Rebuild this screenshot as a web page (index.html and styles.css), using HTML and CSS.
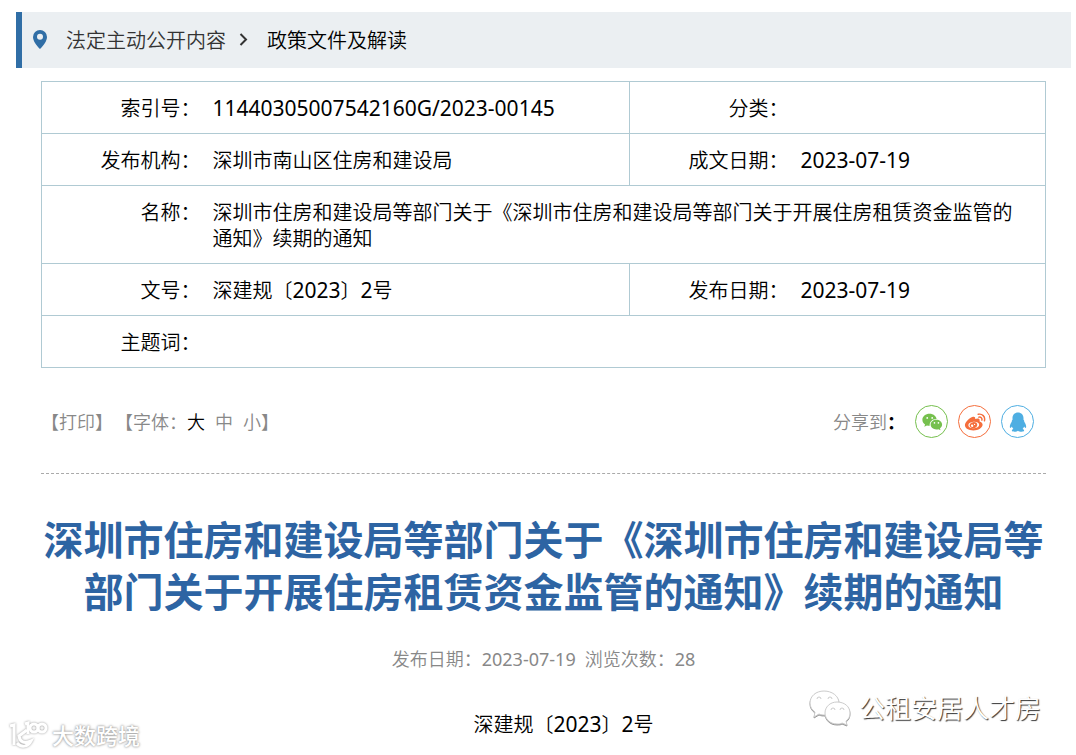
FILE: index.html
```
<!DOCTYPE html>
<html lang="zh-CN">
  <head>
    <meta charset="UTF-8" />
    <meta name="viewport" content="width=device-width, initial-scale=1.0" />
    <title>政策文件及解读</title>
    <link rel="stylesheet" href="styles.css">
  </head>
  <body>
    <nav class="crumbs">
      <svg class="pin" viewBox="0 0 14 19"><path fill-rule="evenodd" d="M7 0a7 7 0 0 1 7 7c0 4-3.500 8.500-7 12C3.500 15.500 0 11 0 7a7 7 0 0 1 7-7zm0 3.800a3 3 0 1 0 0 6 3 3 0 0 0 0-6z"/></svg>
      <a href="#">法定主动公开内容</a>
      <svg class="arrow" viewBox="0 0 9 13"><path d="M1.500 1l5.500 5.500L1.500 12"/></svg>
      <a href="#" class="current">政策文件及解读</a>
    </nav>

    <main class="content">
      <table class="info">
        <colgroup>
          <col class="col-label" />
          <col />
          <col class="col-label" />
          <col class="col-date" />
        </colgroup>
        <tr>
          <th>索引号：</th>
          <td><span class="num">11440305007542160G/2023-00145</span></td>
          <th class="split">分类：</th>
          <td></td>
        </tr>
        <tr>
          <th>发布机构：</th>
          <td>深圳市南山区住房和建设局</td>
          <th class="split">成文日期：</th>
          <td><span class="num">2023-07-19</span></td>
        </tr>
        <tr>
          <th>名称：</th>
          <td colspan="3">深圳市住房和建设局等部门关于《深圳市住房和建设局等部门关于开展住房租赁资金监管的通知》续期的通知</td>
        </tr>
        <tr>
          <th>文号：</th>
          <td>深建规〔<span class="num">2023</span>〕<span class="num">2</span>号</td>
          <th class="split">发布日期：</th>
          <td><span class="num">2023-07-19</span></td>
        </tr>
        <tr>
          <th>主题词：</th>
          <td colspan="3"></td>
        </tr>
      </table>

      <div class="tools">
        <div class="print">
          <button>【打印】</button>
          <div class="sizes">【字体：<button class="on">大</button><button>中</button><button>小</button>】</div>
        </div>
        <div class="share">
          <span>分享到<b>：</b></span>
          <a href="#" class="wechat" aria-label="微信">
            <svg viewBox="0 0 24 24">
              <path d="M9.500 3C4.800 3 1.500 6 1.500 9.600c0 2.100 1.100 3.900 2.900 5.100l-.8 2.500 2.900-1.500c1 .3 1.900.4 3 .4C9 11.500 12.500 8.500 17 8.600 16.300 5.300 13.300 3 9.500 3z"/>
              <path d="M23 14.800c0-3-2.900-5.300-6.200-5.300-3.500 0-6.300 2.300-6.300 5.300s2.800 5.400 6.300 5.400c.8 0 1.500-.2 2.200-.4l2.300 1.300-.6-2.100c1.400-1 2.300-2.500 2.300-4.200z"/>
              <g fill="#fff"><circle cx="6.800" cy="7.500" r="1"/><circle cx="12.200" cy="7.500" r="1"/><circle cx="14.700" cy="13" r=".9"/><circle cx="19" cy="13" r=".9"/></g>
            </svg>
          </a>
          <a href="#" class="weibo" aria-label="微博">
            <svg viewBox="0 0 24 24">
              <path fill-rule="evenodd" d="M9.800 6.300c1.500-.5 2.800.3 2.400 2.400 2-.8 5.100-1 4.900 1.300 0 .6-.3 1.200-.1 1.500 2 .6 3.300 1.800 3.300 3.500 0 3.200-4.600 6.200-10 6.200S1 18.700 1 15.500c0-3.300 5-8.200 8.800-9.200zM10.300 11.800c-3.600.3-5.800 1.900-5.500 4s2.800 3.200 6.200 2.900 5.800-2.200 5.500-4.100-2.900-3.100-6.200-2.800z"/>
              <path fill-rule="evenodd" d="M10 12.200c2.600-.4 4.600 1 4.500 3s-2 3.400-4.200 3.500-4.300-1.100-4.200-3.100 1.700-3.100 3.900-3.400zm-1.200 2.600a1.300 1.300 0 1 0 .1 2.600 1.300 1.300 0 0 0-.1-2.600zm2.700-.8a.7.7 0 1 0 0 1.400.7.7 0 0 0 0-1.400z"/>
              <path d="M15.500 3.600c4.200-1 8 2.500 6.800 7M16.200 6.700c2.200-.4 3.800 1 3.300 3.200" fill="none" stroke="currentColor" stroke-width="1.600" stroke-linecap="round"/>
            </svg>
          </a>
          <a href="#" class="qq" aria-label="QQ">
            <svg viewBox="0 0 24 24">
              <path d="M12 1.500c-3.600 0-6 2.600-6 6.300v1.700c-.7.500-.9 1.400-.8 2.100C3.700 13.500 2.800 16 3.200 18c.3 1 1.400.2 2.100-1 .3 1.100.9 2 1.700 2.700-1.200.5-1.700 1-1.700 1.700 0 1.700 5.300 1.600 6.700.2 1.400 1.400 6.700 1.500 6.700-.2 0-.7-.5-1.200-1.700-1.700.8-.7 1.400-1.600 1.700-2.700.7 1.200 1.800 2 2.100 1 .4-2-.5-4.500-2-6.400.1-.7-.1-1.600-.8-2.100V7.800c0-3.700-2.400-6.300-6-6.300z"/>
            </svg>
          </a>
        </div>
      </div>

      <h1>深圳市住房和建设局等部门关于《深圳市住房和建设局等部门关于开展住房租赁资金监管的通知》续期的通知</h1>
      <p class="meta"><span>发布日期：<span class="num">2023-07-19</span></span><span>浏览次数：<span class="num">28</span></span></p>
      <p class="doc-no">深建规〔<span class="num">2023</span>〕<span class="num">2</span>号</p>
    </main>

    <div class="mark mark-left">
      <svg viewBox="0 0 40 28">
        <path d="M2 5l4-1v20M19 9l-8 6c1 6 5 8 12 5-3 6-10 7-14 2"/>
        <path d="M17 3l3-1v11"/><circle cx="26" cy="7" r="4"/><circle cx="34" cy="7" r="4"/>
      </svg>
      <span>大数跨境</span>
    </div>
    <div class="mark mark-right">
      <svg viewBox="0 0 42 36">
        <path d="M15 1C7 1 1 6 1 13c0 4 2 7 5 9l-1 5 5-3c2 1 4 1 6 1 9 0 14-5 14-12S23 1 15 1z"/>
        <path d="M28 12c-7 0-12 5-12 11s5 11 12 11c2 0 4 0 5-1l5 2-1-4c3-2 4-5 4-8 0-6-5-11-13-11z"/>
        <path d="M8 9a2 2 0 0 1 4 0M19 9a2 2 0 0 1 4 0M22 20a2 2 0 0 1 4 0M31 20a2 2 0 0 1 4 0"/>
      </svg>
      <span>公租安居人才房</span>
    </div>
  </body>
</html>
```
FILE: styles.css
```
* {
  margin: 0;
  padding: 0;
  box-sizing: border-box;
}
body {
  position: relative;
  background: #fff;
  color: #000;
  font-family: "Noto Sans", "Noto Sans CJK SC", sans-serif;
  font-size: 20px;
  font-weight: 350;
  line-height: 26px;
  text-spacing-trim: space-all;
  padding: 12px 5px 16px 16px;
}
a {
  color: inherit;
  text-decoration: none;
}
button {
  border: 0;
  background: none;
  color: inherit;
  font: inherit;
  cursor: pointer;
}
.num {
  font-size: 21px;
  font-weight: 400;
  line-height: 1;
}

.crumbs {
  display: flex;
  align-items: center;
  height: 56px;
  padding: 2px 0 0 11px;
  border-left: 6px solid #306ea6;
  background: #ebeff2;
  color: #333;
}
.crumbs .current {
  color: #000;
}
.pin {
  width: 14px;
  height: 19px;
  margin: 0 19px 3px 0;
  fill: #306ea6;
}
.arrow {
  width: 9px;
  height: 13px;
  margin: 0 19px 3px 13px;
  fill: none;
  stroke: #333;
  stroke-width: 2;
}

.content {
  padding: 13px 25px 0;
}
.info {
  width: 100%;
  table-layout: fixed;
  border-collapse: collapse;
  border: 1px solid #b0cad3;
}
.col-label {
  width: 159px;
}
.col-date {
  width: 257px;
}
.info tr {
  height: 52px;
  border-bottom: 1px solid #b0cad3;
}
.info th,
.info td {
  padding: 14px 0 11px;
  vertical-align: top;
  font-weight: inherit;
}
.info th {
  text-align: right;
}
.info td {
  padding-left: 12px;
  padding-right: 20px;
}
.info .split {
  border-left: 1px solid #b0cad3;
}

.tools {
  display: flex;
  justify-content: space-between;
  align-items: center;
  height: 106px;
  padding-top: 2px;
  border-bottom: 1px dashed #aaa;
  color: #888;
  font-size: 18px;
}
.print,
.sizes {
  display: flex;
}
.print {
  gap: 2px;
}
.sizes button + button {
  margin-left: 10px;
}
.sizes .on {
  color: #000;
}
.share {
  display: flex;
  align-items: center;
  gap: 10px;
  padding-right: 12px;
}
.share b {
  color: #000;
}
.share a {
  display: flex;
  align-items: center;
  justify-content: center;
  width: 33px;
  height: 33px;
  border: 1px solid;
  border-radius: 50%;
}
.share svg {
  width: 22px;
  height: 22px;
  fill: currentColor;
}
.wechat {
  color: #76c04e;
}
.weibo {
  color: #f56e3c;
}
.qq {
  color: #4eaee2;
}

h1 {
  margin-top: 40px;
  color: #2d64a3;
  font-size: 40px;
  font-weight: 700;
  line-height: 52px;
  text-align: center;
}
.meta {
  display: flex;
  justify-content: center;
  gap: 9px;
  margin-top: 28px;
  color: #888;
  font-size: 18px;
}
.meta .num {
  font-size: 18px;
}
.doc-no {
  margin-top: 40px;
  text-align: center;
  text-indent: 40px;
}

/* watermarks over the page */
.mark {
  position: absolute;
  display: flex;
  align-items: center;
  color: #fff;
}
.mark svg {
  fill: none;
  stroke: #fff;
}
.mark-left {
  left: 8px;
  bottom: 5px;
  gap: 4px;
  font-size: 22px;
  font-weight: 500;
  text-shadow: 0 0 2px #999, 0 0 3px #aaa;
}
.mark-left svg {
  width: 40px;
  height: 28px;
  stroke-width: 3;
  filter: drop-shadow(0 0 1px #999);
}
.mark-right {
  right: 35px;
  bottom: 28px;
  gap: 8px;
  font-size: 26px;
  line-height: 36px;
  text-shadow: 1px 1px 1px #333;
}
.mark-right svg {
  width: 42px;
  height: 36px;
  fill: #fff;
  stroke: #ccc;
  filter: drop-shadow(0 1px 0 #999);
}
```
